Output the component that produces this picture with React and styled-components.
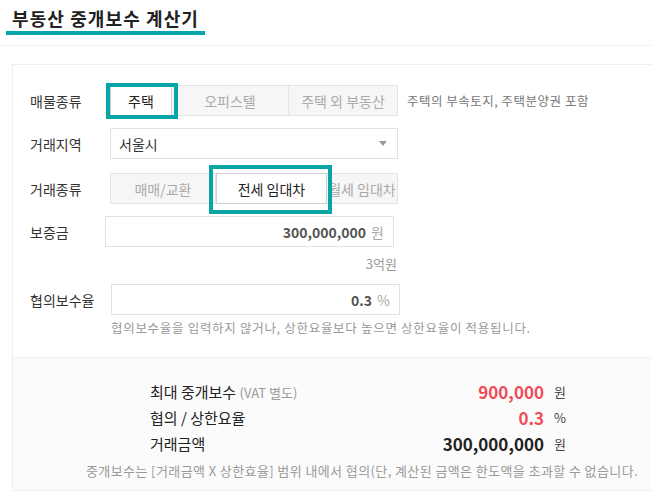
import React, { useState } from "react";
import styled, { createGlobalStyle } from "styled-components";

const TEAL = "#08a4a6";

const GlobalStyle = createGlobalStyle`
  body {
    margin: 0;
    background: #fff;
    font-family: "Noto Sans CJK KR", "Noto Sans", sans-serif;
    color: #333;
    overflow: hidden;
  }
`;

export const Header = styled.div`
  padding: 6px 0 0 6px;
  height: 39px;
  border-bottom: 1px solid #f0f0f0;
`;

export const Title = styled.h1`
  display: inline-block;
  margin: 0;
  padding: 0 6px 1px;
  font-size: 18px;
  font-weight: 700;
  line-height: 24px;
  color: #222;
  border-bottom: 4px solid ${TEAL};
  letter-spacing: 1.1px;
`;

export const Panel = styled.div`
  margin: 18px 0 0 12px;
  border: 1px solid #eeeeee;
  border-right: none;
`;

export const Form = styled.div`
  padding: 20px 0 20px 17px;
`;

export const Row = styled.div`
  display: flex;
  align-items: center;
  margin-top: ${(p) => p.$mt || 0}px;
`;

export const Label = styled.div`
  width: 80px;
  flex: none;
  font-size: 14px;
  color: #333;
`;

export const Segment = styled.div`
  display: flex;
  height: 31px;
`;

export const SegButton = styled.button`
  position: relative;
  width: ${(p) => p.$w}px;
  height: 100%;
  padding: 0;
  margin: 0;
  font-family: inherit;
  font-size: 14px;
  white-space: nowrap;
  overflow: ${(p) => (p.$clip ? "hidden" : "visible")};
  display: flex;
  justify-content: center;
  align-items: center;
  border: 1px solid ${(p) => (p.$active ? "#cfcfcf" : "#e4e4e4")};
  border-left-width: ${(p) => (p.$first || p.$active ? 1 : 0)}px;
  background: ${(p) => (p.$active ? "#fff" : "#f6f6f6")};
  color: ${(p) => (p.$active ? "#222" : "#aaa")};
  cursor: pointer;
`;

export const Mark = styled.span`
  position: absolute;
  top: ${(p) => p.$t}px;
  left: ${(p) => p.$l}px;
  right: ${(p) => p.$r}px;
  bottom: ${(p) => p.$b}px;
  border: 4px solid ${TEAL};
  pointer-events: none;
  z-index: 2;
`;

export const Note = styled.span`
  margin-left: 9px;
  font-size: 12.5px;
  letter-spacing: 0.5px;
  color: #777;
`;

export const Select = styled.div`
  box-sizing: border-box;
  width: 288px;
  height: 31px;
  border: 1px solid #e2e2e2;
  display: flex;
  align-items: center;
  justify-content: space-between;
  padding: 0 10px 0 8px;
  font-size: 14px;
  color: #333;
`;

export const Caret = styled.span`
  width: 0;
  height: 0;
  border-left: 4px solid transparent;
  border-right: 4px solid transparent;
  border-top: 5px solid #999;
`;

export const InputBox = styled.div`
  width: ${(p) => p.$w}px;
  height: 31px;
  margin-left: ${(p) => p.$shift || 0}px;
  border: 1px solid #e2e2e2;
  display: flex;
  align-items: center;
  justify-content: flex-end;
  padding-right: 9px;
  box-sizing: border-box;
`;

export const Value = styled.span`
  font-size: 14px;
  font-weight: 700;
  color: #555;
`;

export const Unit = styled.span`
  margin-left: 5px;
  font-size: 14px;
  color: #aaa;
`;

export const SubText = styled.div`
  margin: ${(p) => p.$m};
  width: ${(p) => (p.$w ? `${p.$w}px` : "auto")};
  font-size: ${(p) => p.$size || 12}px;
  letter-spacing: ${(p) => p.$ls || 0}px;
  color: #999;
  text-align: ${(p) => p.$align || "left"};
`;

export const Result = styled.div`
  background: #fbfbfb;
  border-top: 1px solid #f0f0f0;
  padding: 20px 0 10px;
`;

export const ResultGrid = styled.div`
  display: grid;
  grid-template-columns: 1fr auto 22px;
  grid-auto-rows: 26px;
  align-items: center;
  width: 416px;
  margin-left: 137px;
`;

export const ResultLabel = styled.div`
  font-size: 15px;
  color: #222;
  small {
    font-size: 13px;
    color: #999;
  }
`;

export const ResultValue = styled.div`
  font-size: 17px;
  font-weight: 700;
  text-align: right;
  color: ${(p) => (p.$red ? "#f04b57" : "#222")};
`;

export const ResultUnit = styled.div`
  font-size: 13px;
  color: #444;
  text-align: right;
`;

export const Footer = styled.div`
  margin: 5px 0 0 73px;
  font-size: 13px;
  letter-spacing: 0.4px;
  color: #9a9a9a;
  white-space: nowrap;
`;

const App = () => {
  const [kind, setKind] = useState(0);
  const [deal, setDeal] = useState(1);

  const kinds = [
    { text: "주택", w: 62 },
    { text: "오피스텔", w: 117 },
    { text: "주택 외 부동산", w: 109 },
  ];
  const deals = [
    { text: "매매/교환", w: 106 },
    { text: "전세 임대차", w: 111 },
    { text: "월세 임대차", w: 71 },
  ];

  return (
    <>
      <GlobalStyle />
      <Header>
        <Title>부동산 중개보수 계산기</Title>
      </Header>
      <Panel>
        <Form>
          <Row>
            <Label>매물종류</Label>
            <Segment>
              {kinds.map((k, idx) => (
                <SegButton
                  key={idx}
                  $w={k.w}
                  $first={idx === 0}
                  $active={kind === idx}
                  onClick={() => setKind(idx)}
                >
                  {k.text}
                  {kind === idx && idx === 0 && <Mark $t={-3} $l={-5} $r={-7} $b={-4} />}
                </SegButton>
              ))}
            </Segment>
            <Note>주택의 부속토지, 주택분양권 포함</Note>
          </Row>

          <Row $mt={12}>
            <Label>거래지역</Label>
            <Select>
              서울시
              <Caret />
            </Select>
          </Row>

          <Row $mt={14}>
            <Label>거래종류</Label>
            <Segment>
              {deals.map((d, idx) => (
                <SegButton
                  key={idx}
                  $w={d.w}
                  $first={idx === 0}
                  $active={deal === idx}
                  $clip={idx === 2}
                  onClick={() => setDeal(idx)}
                >
                  {d.text}
                  {deal === idx && idx === 1 && <Mark $t={-9} $l={-8} $r={-6} $b={-11} />}
                </SegButton>
              ))}
            </Segment>
          </Row>

          <Row $mt={12}>
            <Label>보증금</Label>
            <InputBox $w={289} $shift={-5}>
              <Value>300,000,000</Value>
              <Unit>원</Unit>
            </InputBox>
          </Row>
          <SubText $m="7px 0 0 0" $w={367} $size={13} $align="right">
            3억원
          </SubText>

          <Row $mt={11}>
            <Label>협의보수율</Label>
            <InputBox $w={289} $shift={1}>
              <Value>0.3</Value>
              <Unit>%</Unit>
            </InputBox>
          </Row>
          <SubText $m="3px 0 0 81px" $size={12.5} $ls={0.7}>
            협의보수율을 입력하지 않거나, 상한요율보다 높으면 상한요율이 적용됩니다.
          </SubText>
        </Form>

        <Result>
          <ResultGrid>
            <ResultLabel>
              최대 중개보수 <small>(VAT 별도)</small>
            </ResultLabel>
            <ResultValue $red>900,000</ResultValue>
            <ResultUnit>원</ResultUnit>

            <ResultLabel>협의 / 상한요율</ResultLabel>
            <ResultValue $red>0.3</ResultValue>
            <ResultUnit>%</ResultUnit>

            <ResultLabel>거래금액</ResultLabel>
            <ResultValue>300,000,000</ResultValue>
            <ResultUnit>원</ResultUnit>
          </ResultGrid>
          <Footer>
            중개보수는 [거래금액 X 상한효율] 범위 내에서 협의(단, 계산된 금액은 한도액을 초과할 수 없습니다.
          </Footer>
        </Result>
      </Panel>
    </>
  );
};

export default App;
